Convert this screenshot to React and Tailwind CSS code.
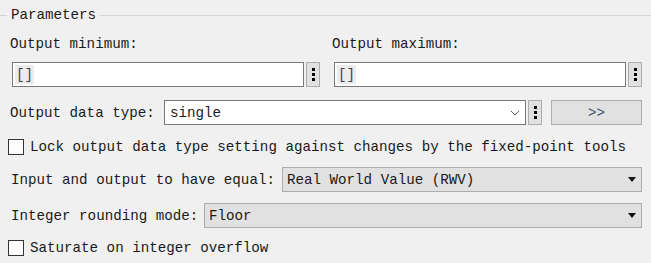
import React from 'react';

const Dots = () => (
    <div className="w-[14px] h-[25px] shrink-0 bg-[#e1e1e1] border border-[#adadad] flex flex-col items-center justify-center gap-[2px]">
        <div className="w-[3px] h-[3px] bg-black"></div>
        <div className="w-[3px] h-[3px] bg-black"></div>
        <div className="w-[3px] h-[3px] bg-black"></div>
    </div>
);

const BracketInput = () => (
    <div className="flex items-center gap-[2px] ml-[2px]">
        <div className="w-[292px] h-[25px] bg-white border border-[#7a7a7a] flex items-center pl-[2px]">
            <span className="bg-[#ececec] h-[19px] px-[1px] flex items-center text-[#444]">[]</span>
        </div>
        <Dots />
    </div>
);

const Check = ({ label }) => (
    <div className="flex items-center pl-[8px] h-[16px]">
        <div className="w-[16px] h-[16px] bg-white border border-[#333] shrink-0"></div>
        <span className="ml-[6px]">{label}</span>
    </div>
);

const GraySelect = ({ value, width }) => (
    <div className={`${width} h-[25px] bg-[#e1e1e1] border border-[#adadad] flex items-center justify-between pl-[4px] pr-[5px]`}>
        <span>{value}</span>
        <svg width="8" height="5" viewBox="0 0 8 5"><path d="M0 0h8L4 5z" fill="#111" /></svg>
    </div>
);

export default function App() {
    return (
        <div className="w-[651px] h-[263px] bg-[#f0f0f0] text-[#1a1a1a] text-[14.2px] leading-[16px] overflow-hidden" style={{ fontFamily: '"Liberation Mono", "DejaVu Sans Mono", monospace' }}>
            <div className="flex items-center pt-[7px]">
                <div className="w-[7px] h-px bg-[#d5d5d5]"></div>
                <span className="px-[4px]">Parameters</span>
                <div className="flex-1 h-px bg-[#d5d5d5]"></div>
            </div>

            <div className="flex mt-[13px]">
                <div className="w-[322px] pl-[10px]">
                    <div>Output minimum:</div>
                    <div className="mt-[10px]"><BracketInput /></div>
                </div>
                <div className="pl-[10px]">
                    <div>Output maximum:</div>
                    <div className="mt-[10px]"><BracketInput /></div>
                </div>
            </div>

            <div className="flex items-center mt-[13px] pl-[10px]">
                <span className="w-[154px]">Output data type:</span>
                <div className="w-[362px] h-[25px] bg-white border border-[#7a7a7a] flex items-center justify-between pl-[5px] pr-[5px]">
                    <span>single</span>
                    <svg width="10" height="6" viewBox="0 0 10 6"><path d="M1 1l4 4 4-4" fill="none" stroke="#555" strokeWidth="1" /></svg>
                </div>
                <div className="ml-[2px]"><Dots /></div>
                <div className="ml-[9px] w-[91px] h-[25px] bg-[#e1e1e1] border border-[#adadad] flex items-center justify-center text-[#3a4a6a]">&gt;&gt;</div>
            </div>

            <div className="mt-[14px]">
                <Check label="Lock output data type setting against changes by the fixed-point tools" />
            </div>

            <div className="flex items-center mt-[12px] pl-[11px]">
                <span className="w-[271px]">Input and output to have equal:</span>
                <GraySelect value="Real World Value (RWV)" width="w-[360px]" />
            </div>

            <div className="flex items-center mt-[11px] pl-[11px]">
                <span className="w-[193px]">Integer rounding mode:</span>
                <GraySelect value="Floor" width="w-[438px]" />
            </div>

            <div className="mt-[12px]">
                <Check label="Saturate on integer overflow" />
            </div>
        </div>
    );
}
